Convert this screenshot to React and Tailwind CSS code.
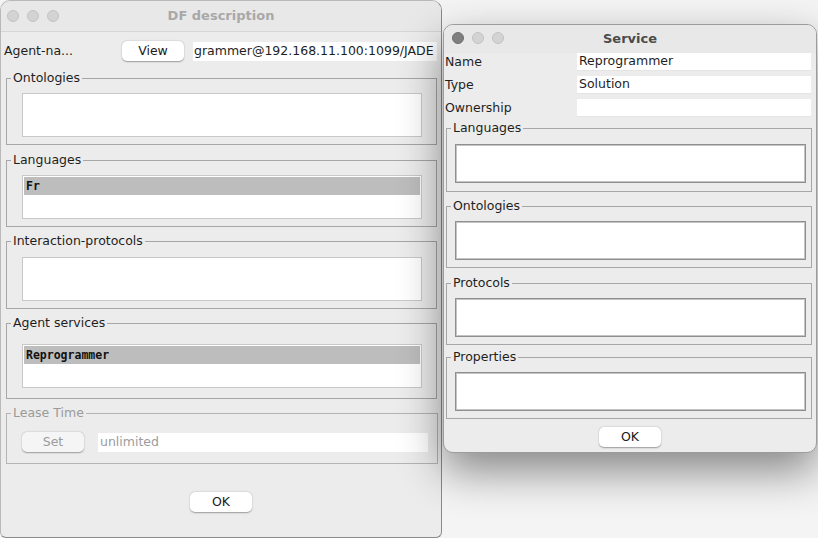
import React from 'react';

const sans = "font-['DejaVu_Sans',sans-serif]";
const mono = "font-['DejaVu_Sans_Mono',monospace]";

function Lights({ active }) {
  return (
    <div className="flex items-center gap-[8px]">
      <span className={`w-[12px] h-[12px] rounded-full border ${active ? 'bg-[#7f7f7f] border-[#707070]' : 'bg-[#d3d3d3] border-[#c2c2c2]'}`} />
      <span className="w-[12px] h-[12px] rounded-full border bg-[#d3d3d3] border-[#c2c2c2]" />
      <span className="w-[12px] h-[12px] rounded-full border bg-[#d3d3d3] border-[#c2c2c2]" />
    </div>
  );
}

// titled border; horizontal padding sits on the inner div so the legend stays at the left edge
function Group({ title, className, inner, children, dim }) {
  return (
    <fieldset className={`border ${dim ? 'border-[#b4b4b4]' : 'border-[#a6a6a6]'} ${className}`}>
      <legend className={`ml-[4px] px-[2px] text-[12.5px] leading-[16px] ${dim ? 'text-[#9a9a9a]' : 'text-[#1e1e1e]'}`}>{title}</legend>
      <div className={inner}>{children}</div>
    </fieldset>
  );
}

function ListBox({ item }) {
  return (
    <div className="h-[44px] bg-white border border-[#c8c8c8] p-[1px]">
      {item && (
        <div className={`h-[18px] bg-[#bdbdbd] pl-[2px] text-[11.5px] leading-[18px] font-bold text-[#111] ${mono}`}>{item}</div>
      )}
    </div>
  );
}

function Box() {
  return <div className="h-[39px] bg-white border border-[#8f8f8f] shadow-[inset_0_0_0_1px_#c4c4c4]" />;
}

function Button({ children, className, disabled }) {
  return (
    <div
      className={`w-[62px] h-[20px] rounded-[5px] flex items-center justify-center text-[12.5px] shadow-[0_0.5px_1.5px_rgba(0,0,0,0.35)] ${disabled ? 'bg-[#f5f5f5] text-[#9c9c9c]' : 'bg-white text-[#1a1a1a]'} ${className || ''}`}
    >
      {children}
    </div>
  );
}

function DfWindow() {
  return (
    <div className="absolute left-0 top-0 w-[442px] h-[538px] rounded-t-[10px] rounded-b-[6px] bg-[#ececec] border border-[#b9b9b9] border-r-[#8a8a8a] border-b-[#8a8a8a] overflow-hidden flex flex-col">
      <div className="relative h-[31px] shrink-0 flex items-center justify-center bg-[#e8e8e8] border-b border-[#d6d6d6]">
        <div className="absolute left-[6px] top-[9px]">
          <Lights />
        </div>
        <span className="text-[13px] font-bold text-[#a8a8a8]">DF description</span>
      </div>

      <div className="flex items-center h-[20px] mt-[9px] text-[12.5px] text-[#1e1e1e]">
        <span className="w-[121px] pl-[3px]">Agent-na...</span>
        <Button>View</Button>
        <div className="ml-[9px] w-[244px] h-[19px] bg-white flex items-center pl-[1px] overflow-hidden whitespace-nowrap">
          grammer@192.168.11.100:1099/JADE
        </div>
      </div>

      <Group title="Ontologies" className="ml-[5px] w-[431px] mt-[9px] pt-[7px] pb-[7px]" inner="pl-[15px] pr-[14px]">
        <ListBox />
      </Group>
      <Group title="Languages" className="ml-[5px] w-[431px] mt-[7px] pt-[7px] pb-[7px]" inner="pl-[15px] pr-[14px]">
        <ListBox item="Fr" />
      </Group>
      <Group title="Interaction-protocols" className="ml-[5px] w-[431px] mt-[6px] pt-[8px] pb-[7px]" inner="pl-[15px] pr-[14px]">
        <ListBox />
      </Group>
      <Group title="Agent services" className="ml-[5px] w-[431px] mt-[6px] pt-[13px] pb-[10px]" inner="pl-[15px] pr-[14px]">
        <ListBox item="Reprogrammer" />
      </Group>
      <Group title="Lease Time" dim className="ml-[5px] w-[431px] mt-[6px] pt-[11px] pb-[11px]" inner="pl-[15px] pr-[9px]">
        <div className="flex items-center">
          <Button disabled>Set</Button>
          <div className="ml-[14px] w-[330px] h-[19px] bg-white flex items-center pl-[2px] text-[12.5px] text-[#9c9c9c]">unlimited</div>
        </div>
      </Group>

      <div className="flex justify-center mt-[28px]">
        <Button>OK</Button>
      </div>
    </div>
  );
}

function Field({ label, value }) {
  return (
    <div className="flex items-center h-[18px] text-[12.5px] text-[#1e1e1e]">
      <span className="w-[132px]">{label}</span>
      <div className="w-[234px] h-[18px] bg-white flex items-center pl-[2px] border-b border-[#e4e4e4]">{value}</div>
    </div>
  );
}

function ServiceWindow() {
  return (
    <div className="absolute left-[443px] top-[24px] w-[374px] h-[429px] rounded-[10px] bg-[#ececec] border border-[#9c9c9c] shadow-[0_18px_44px_rgba(0,0,0,0.45)] overflow-hidden flex flex-col">
      <div className="relative h-[28px] shrink-0 flex items-center justify-center bg-[#e8e8e8]">
        <div className="absolute left-[8px] top-[7px]">
          <Lights active />
        </div>
        <span className="text-[13px] font-bold text-[#4b4b4b]">Service</span>
      </div>

      <div className="flex flex-col gap-[5px] pl-[1px]">
        <Field label="Name" value="Reprogrammer" />
        <Field label="Type" value="Solution" />
        <Field label="Ownership" value="" />
      </div>

      <Group title="Languages" className="ml-[2px] w-[366px] mt-[3px] pt-[8px] pb-[8px]" inner="pl-[8px] pr-[5px]">
        <Box />
      </Group>
      <Group title="Ontologies" className="ml-[2px] w-[366px] mt-[6px] pt-[7px] pb-[7px]" inner="pl-[8px] pr-[5px]">
        <Box />
      </Group>
      <Group title="Protocols" className="ml-[2px] w-[366px] mt-[7px] pt-[7px] pb-[7px]" inner="pl-[8px] pr-[5px]">
        <Box />
      </Group>
      <Group title="Properties" className="ml-[2px] w-[366px] mt-[4px] pt-[7px] pb-[7px]" inner="pl-[8px] pr-[5px]">
        <Box />
      </Group>

      <div className="flex justify-center mt-[8px]">
        <Button>OK</Button>
      </div>
    </div>
  );
}

export default function App() {
  return (
    <div className={`relative w-[818px] h-[538px] overflow-hidden bg-[#f4f4f4] ${sans}`}>
      <DfWindow />
      <ServiceWindow />
    </div>
  );
}
